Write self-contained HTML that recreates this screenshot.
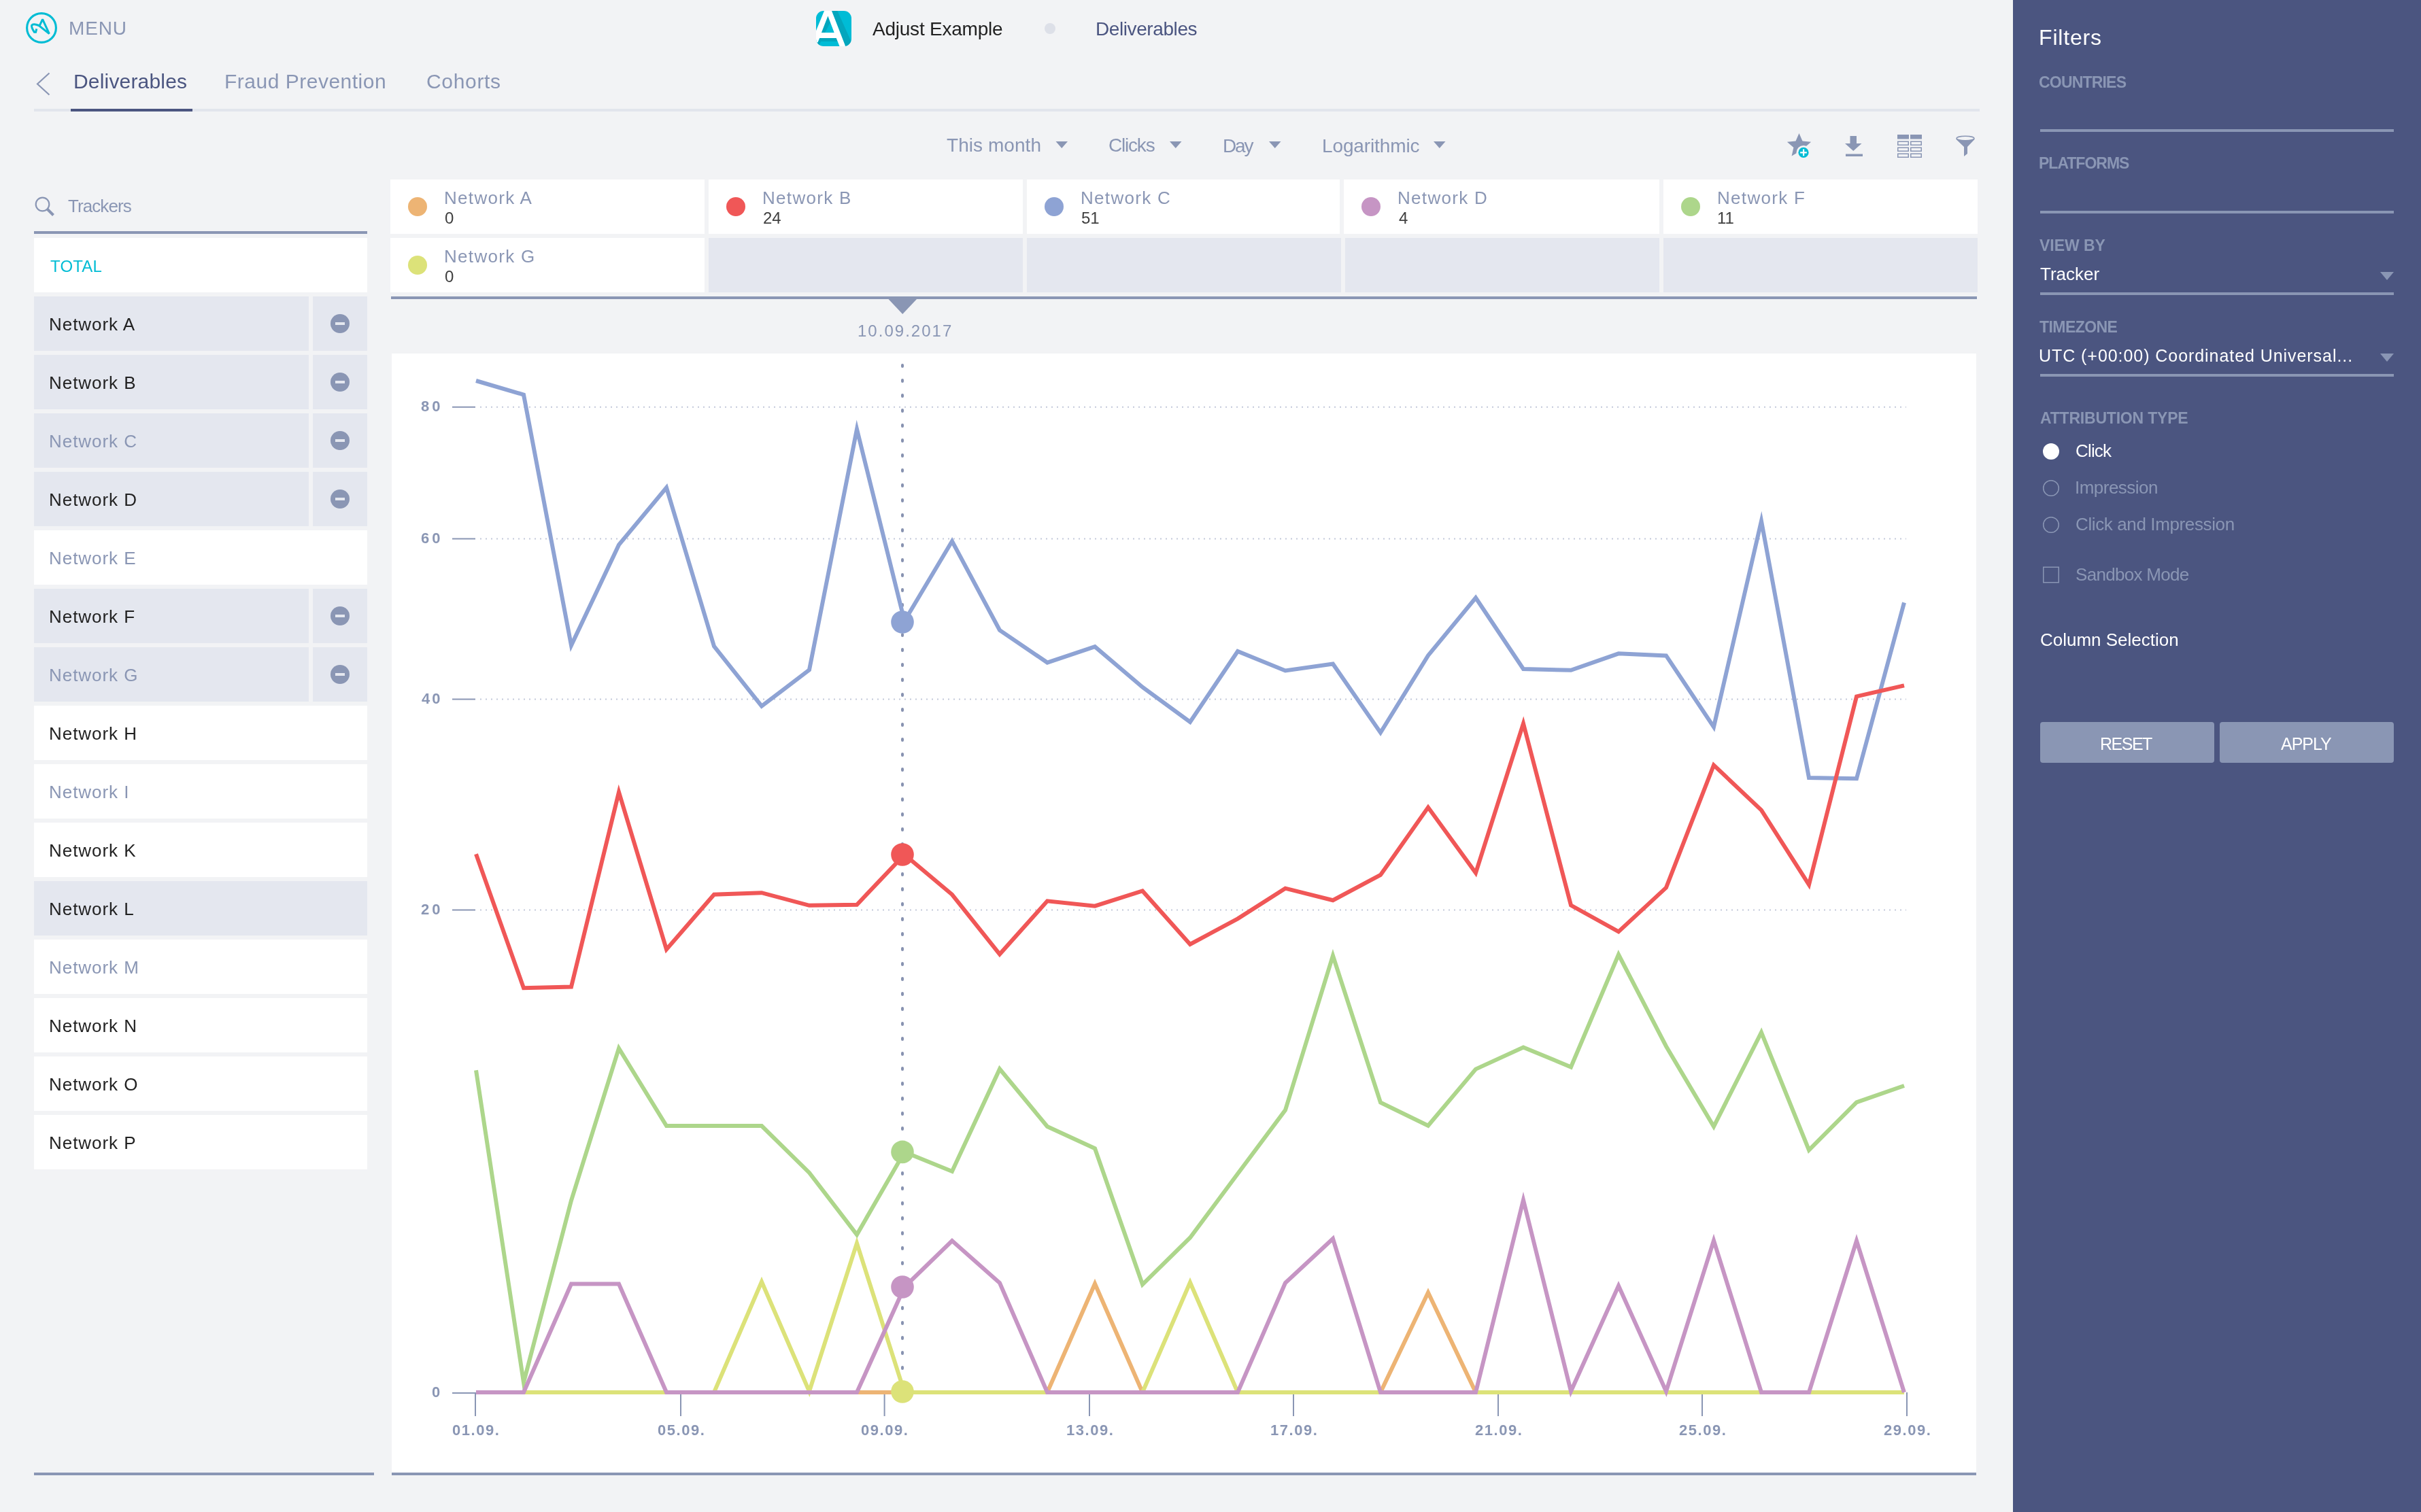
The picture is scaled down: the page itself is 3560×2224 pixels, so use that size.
<!DOCTYPE html>
<html><head><meta charset="utf-8"><style>
html,body{margin:0;padding:0;}
body{width:3560px;height:2224px;background:#f2f3f5;position:relative;overflow:hidden;font-family:"Liberation Sans",sans-serif;}
.r{position:absolute;}
.t{position:absolute;white-space:nowrap;will-change:transform;}
svg{position:absolute;left:0;top:0;}
</style></head><body>
<div class="r" style="left:2960px;top:0px;width:600px;height:2224px;background:#4b5580;"></div><div class="r" style="left:50px;top:160px;width:2861px;height:4px;background:#e2e5ec;"></div><div class="r" style="left:104px;top:160px;width:179px;height:4px;background:#4b5580;"></div><div class="r" style="left:50px;top:340px;width:490px;height:4px;background:#8a96b4;"></div><div class="r" style="left:50px;top:350px;width:490px;height:80px;background:#ffffff;"></div><div class="r" style="left:50px;top:436px;width:404px;height:80px;background:#e4e7ef;"></div><div class="r" style="left:460px;top:436px;width:80px;height:80px;background:#e4e7ef;"></div><div class="r" style="left:50px;top:522px;width:404px;height:80px;background:#e4e7ef;"></div><div class="r" style="left:460px;top:522px;width:80px;height:80px;background:#e4e7ef;"></div><div class="r" style="left:50px;top:608px;width:404px;height:80px;background:#e4e7ef;"></div><div class="r" style="left:460px;top:608px;width:80px;height:80px;background:#e4e7ef;"></div><div class="r" style="left:50px;top:694px;width:404px;height:80px;background:#e4e7ef;"></div><div class="r" style="left:460px;top:694px;width:80px;height:80px;background:#e4e7ef;"></div><div class="r" style="left:50px;top:780px;width:490px;height:80px;background:#ffffff;"></div><div class="r" style="left:50px;top:866px;width:404px;height:80px;background:#e4e7ef;"></div><div class="r" style="left:460px;top:866px;width:80px;height:80px;background:#e4e7ef;"></div><div class="r" style="left:50px;top:952px;width:404px;height:80px;background:#e4e7ef;"></div><div class="r" style="left:460px;top:952px;width:80px;height:80px;background:#e4e7ef;"></div><div class="r" style="left:50px;top:1038px;width:490px;height:80px;background:#ffffff;"></div><div class="r" style="left:50px;top:1124px;width:490px;height:80px;background:#ffffff;"></div><div class="r" style="left:50px;top:1210px;width:490px;height:80px;background:#ffffff;"></div><div class="r" style="left:50px;top:1296px;width:490px;height:80px;background:#e4e7ef;"></div><div class="r" style="left:50px;top:1382px;width:490px;height:80px;background:#ffffff;"></div><div class="r" style="left:50px;top:1468px;width:490px;height:80px;background:#ffffff;"></div><div class="r" style="left:50px;top:1554px;width:490px;height:80px;background:#ffffff;"></div><div class="r" style="left:50px;top:1640px;width:490px;height:80px;background:#ffffff;"></div><div class="r" style="left:50px;top:2166px;width:500px;height:4px;background:#8a96b4;"></div><div class="r" style="left:574px;top:264px;width:462px;height:80px;background:#ffffff;"></div><div class="r" style="left:574px;top:350px;width:462px;height:80px;background:#ffffff;"></div><div class="r" style="left:1042px;top:264px;width:462px;height:80px;background:#ffffff;"></div><div class="r" style="left:1042px;top:350px;width:462px;height:80px;background:#e4e7ef;"></div><div class="r" style="left:1510px;top:264px;width:460px;height:80px;background:#ffffff;"></div><div class="r" style="left:1510px;top:350px;width:462px;height:80px;background:#e4e7ef;"></div><div class="r" style="left:1976px;top:264px;width:464px;height:80px;background:#ffffff;"></div><div class="r" style="left:1978px;top:350px;width:462px;height:80px;background:#e4e7ef;"></div><div class="r" style="left:2446px;top:264px;width:462px;height:80px;background:#ffffff;"></div><div class="r" style="left:2446px;top:350px;width:462px;height:80px;background:#e4e7ef;"></div><div class="r" style="left:575px;top:436px;width:2332px;height:4px;background:#8a96b4;"></div><div class="r" style="left:576px;top:520px;width:2330px;height:1646px;background:#ffffff;"></div><div class="r" style="left:576px;top:2166px;width:2330px;height:4px;background:#8a96b4;"></div><div class="r" style="left:3000px;top:190px;width:520px;height:4px;background:#8a96b4;"></div><div class="r" style="left:3000px;top:310px;width:520px;height:4px;background:#8a96b4;"></div><div class="r" style="left:3000px;top:430px;width:520px;height:4px;background:#8a96b4;"></div><div class="r" style="left:3000px;top:550px;width:520px;height:4px;background:#8a96b4;"></div><div class="r" style="left:3000px;top:1062px;width:256px;height:60px;background:#8a96b4;border-radius:4px;"></div><div class="r" style="left:3264px;top:1062px;width:256px;height:60px;background:#8a96b4;border-radius:4px;"></div>
<svg width="3560" height="2224" viewBox="0 0 3560 2224">
<circle cx="500" cy="476" r="14" fill="#8a96b4"/><rect x="493" y="474" width="14" height="4" fill="#e4e7ef"/><circle cx="500" cy="562" r="14" fill="#8a96b4"/><rect x="493" y="560" width="14" height="4" fill="#e4e7ef"/><circle cx="500" cy="648" r="14" fill="#8a96b4"/><rect x="493" y="646" width="14" height="4" fill="#e4e7ef"/><circle cx="500" cy="734" r="14" fill="#8a96b4"/><rect x="493" y="732" width="14" height="4" fill="#e4e7ef"/><circle cx="500" cy="906" r="14" fill="#8a96b4"/><rect x="493" y="904" width="14" height="4" fill="#e4e7ef"/><circle cx="500" cy="992" r="14" fill="#8a96b4"/><rect x="493" y="990" width="14" height="4" fill="#e4e7ef"/><circle cx="614" cy="304" r="14" fill="#edb474"/><circle cx="1082" cy="304" r="14" fill="#f05757"/><circle cx="1550" cy="304" r="14" fill="#8ea3d4"/><circle cx="2016" cy="304" r="14" fill="#c695c4"/><circle cx="2486" cy="304" r="14" fill="#add68b"/><circle cx="614" cy="390" r="14" fill="#dce279"/><polygon points="1306.5,440 1348,440 1327.2,462" fill="#8a96b4"/><circle cx="61" cy="41" r="21.4" fill="none" stroke="#00bcd4" stroke-width="3.1"/><path d="M53.8 42.4 L52.6 47.2 L50.4 47.2 Q46 40.5 46.6 37.3 Q48.8 34 57.2 37.5 L72.4 49.6 L62.6 28.4 L58 38.2" fill="none" stroke="#00bcd4" stroke-width="3" stroke-linejoin="miter" stroke-miterlimit="2" stroke-linecap="butt"/><defs><clipPath id="appclip"><rect x="1200" y="16" width="52" height="52" rx="11" ry="11"/></clipPath></defs><g clip-path="url(#appclip)"><rect x="1200" y="16" width="52" height="52" fill="#00bcd6"/><polygon points="1223,16 1231.4,16 1252,62 1252,68 1243.2,68" fill="#03a6bd"/><polygon points="1207.9,47.9 1217.4,23.5 1221,33 1213,47.9" fill="#03a6bd"/><polygon points="1205.2,55.9 1229.7,55.9 1232,61 1207,61 1204,68 1196,68 1196,62.5 1202.4,62.5" fill="#03a6bd"/><path d="M1212,16 L1223,16 L1243.2,68 L1234.5,68 L1229.7,55.9 L1205.2,55.9 L1202.4,62.5 L1196,62.5 L1196,56 L1199.7,46 Z M1217.4,23.5 L1207.9,47.9 L1226.7,47.9 Z" fill="#ffffff" fill-rule="evenodd"/></g><circle cx="1544" cy="42" r="8" fill="#dde0e8"/><polyline points="72.5,107.5 55,123.5 72.5,139.5" fill="none" stroke="#8a96b4" stroke-width="2.2"/><circle cx="62.5" cy="300.5" r="9.8" fill="none" stroke="#8a96b4" stroke-width="2.2"/><line x1="69.5" y1="307.5" x2="78.5" y2="316.5" stroke="#8a96b4" stroke-width="4"/><polygon points="1552.5,208 1570.0,208 1561.25,218" fill="#8a96b4"/><polygon points="1720,208 1737.5,208 1728.75,218" fill="#8a96b4"/><polygon points="1866,208 1883.5,208 1874.75,218" fill="#8a96b4"/><polygon points="2108,208 2125.5,208 2116.75,218" fill="#8a96b4"/><polygon points="3500,400 3520,400 3510,412" fill="#8a96b4"/><polygon points="3500,520 3520,520 3510,532" fill="#8a96b4"/><circle cx="3016" cy="664" r="12" fill="#ffffff"/><circle cx="3016" cy="718" r="11.3" fill="none" stroke="#8a96b4" stroke-width="1.5"/><circle cx="3016" cy="772" r="11.3" fill="none" stroke="#8a96b4" stroke-width="1.5"/><rect x="3004.75" y="834.25" width="22.5" height="22.5" fill="none" stroke="#8a96b4" stroke-width="1.5"/><polygon points="2645.5,196.0 2650.5,207.6 2663.1,208.8 2653.6,217.1 2656.4,229.5 2645.5,223.0 2634.6,229.5 2637.4,217.1 2627.9,208.8 2640.5,207.6" fill="#8a96b4"/><circle cx="2652" cy="224.4" r="10.5" fill="#f2f3f5"/><circle cx="2652" cy="224.4" r="7.6" fill="#00bcd4"/><rect x="2651" y="219.5" width="2.2" height="9.8" fill="#fff"/><rect x="2647.1" y="223.3" width="9.8" height="2.2" fill="#fff"/><polygon points="2720.5,200 2730,200 2730,211 2737.5,211 2725.25,222 2713,211 2720.5,211" fill="#8a96b4"/><rect x="2714" y="226.5" width="25" height="3.5" fill="#8a96b4"/><rect x="2790" y="198" width="17" height="6.5" fill="#8a96b4"/><rect x="2809" y="198" width="17" height="6.5" fill="#8a96b4"/><rect x="2790.75" y="208.25" width="15.5" height="5" fill="none" stroke="#8a96b4" stroke-width="1.5"/><rect x="2809.75" y="208.25" width="15.5" height="5" fill="none" stroke="#8a96b4" stroke-width="1.5"/><rect x="2790.75" y="217.25" width="15.5" height="5" fill="none" stroke="#8a96b4" stroke-width="1.5"/><rect x="2809.75" y="217.25" width="15.5" height="5" fill="none" stroke="#8a96b4" stroke-width="1.5"/><rect x="2790.75" y="226.25" width="15.5" height="5" fill="none" stroke="#8a96b4" stroke-width="1.5"/><rect x="2809.75" y="226.25" width="15.5" height="5" fill="none" stroke="#8a96b4" stroke-width="1.5"/><path d="M2876 204.5 L2904 204.5 L2893 216 L2893 226 L2888 230 L2888 216 Z" fill="#8a96b4"/><ellipse cx="2890" cy="203.5" rx="13" ry="3.2" fill="#f2f3f5" stroke="#8a96b4" stroke-width="1.5"/><line x1="706" y1="598.8" x2="2803" y2="598.8" stroke="#c3c9da" stroke-width="2" stroke-dasharray="2 6"/><line x1="665" y1="598.8" x2="699" y2="598.8" stroke="#8a96b4" stroke-width="2"/><line x1="706" y1="792.5" x2="2803" y2="792.5" stroke="#c3c9da" stroke-width="2" stroke-dasharray="2 6"/><line x1="665" y1="792.5" x2="699" y2="792.5" stroke="#8a96b4" stroke-width="2"/><line x1="706" y1="1028.6" x2="2803" y2="1028.6" stroke="#c3c9da" stroke-width="2" stroke-dasharray="2 6"/><line x1="665" y1="1028.6" x2="699" y2="1028.6" stroke="#8a96b4" stroke-width="2"/><line x1="706" y1="1338.5" x2="2803" y2="1338.5" stroke="#c3c9da" stroke-width="2" stroke-dasharray="2 6"/><line x1="665" y1="1338.5" x2="699" y2="1338.5" stroke="#8a96b4" stroke-width="2"/><line x1="665" y1="2049" x2="701" y2="2049" stroke="#8a96b4" stroke-width="2"/><line x1="699" y1="2048" x2="699" y2="2083" stroke="#8a96b4" stroke-width="2"/><line x1="1001" y1="2048" x2="1001" y2="2083" stroke="#8a96b4" stroke-width="2"/><line x1="1300.6" y1="2048" x2="1300.6" y2="2083" stroke="#8a96b4" stroke-width="2"/><line x1="1602" y1="2048" x2="1602" y2="2083" stroke="#8a96b4" stroke-width="2"/><line x1="1902" y1="2048" x2="1902" y2="2083" stroke="#8a96b4" stroke-width="2"/><line x1="2203" y1="2048" x2="2203" y2="2083" stroke="#8a96b4" stroke-width="2"/><line x1="2503" y1="2048" x2="2503" y2="2083" stroke="#8a96b4" stroke-width="2"/><line x1="2804" y1="2048" x2="2804" y2="2083" stroke="#8a96b4" stroke-width="2"/><line x1="1327" y1="537" x2="1327" y2="2040" stroke="#8792b0" stroke-width="4" stroke-dasharray="2 20" stroke-linecap="round"/><polyline points="700,2048.0 770,2048.0 840,2048.0 910,2048.0 980,2048.0 1050,2048.0 1120,2048.0 1190,2048.0 1260,2048.0 1330,2048.0 1400,2048.0 1470,2048.0 1540,2048.0 1610,1888.3 1680,2048.0 1750,2048.0 1820,2048.0 1890,2048.0 1960,2048.0 2030,2048.0 2100,1901.2 2170,2048.0 2240,2048.0 2310,2048.0 2380,2048.0 2450,2048.0 2520,2048.0 2590,2048.0 2660,2048.0 2730,2048.0 2800,2048.0" fill="none" stroke="#edb474" stroke-width="6" stroke-linejoin="miter" stroke-miterlimit="10"/><polyline points="700,2048.0 770,2048.0 840,2048.0 910,2048.0 980,2048.0 1050,2048.0 1120,1885.3 1190,2046.6 1260,1828.7 1330,2048.0 1400,2048.0 1470,2048.0 1540,2048.0 1610,2048.0 1680,2048.0 1750,1886.3 1820,2048.0 1890,2048.0 1960,2048.0 2030,2048.0 2100,2048.0 2170,2048.0 2240,2048.0 2310,2048.0 2380,2048.0 2450,2048.0 2520,2048.0 2590,2048.0 2660,2048.0 2730,2048.0 2800,2048.0" fill="none" stroke="#dce279" stroke-width="6" stroke-linejoin="miter" stroke-miterlimit="10"/><polyline points="700,560.0 770,580.6 840,949.4 910,801.4 980,717.3 1050,950.5 1120,1038.7 1190,985.4 1260,631.3 1330,913.5 1400,796.0 1470,927.0 1540,974.6 1610,951.2 1680,1010.7 1750,1062.0 1820,958.0 1890,986.5 1960,976.5 2030,1077.6 2100,964.2 2170,879.3 2240,984.0 2310,985.8 2380,961.3 2450,964.4 2520,1069.3 2590,766.4 2660,1144.0 2730,1145.3 2800,886.4" fill="none" stroke="#8ea3d4" stroke-width="6" stroke-linejoin="miter" stroke-miterlimit="10"/><polyline points="700,1256.3 770,1453.3 840,1451.5 910,1165.2 980,1396.4 1050,1315.8 1120,1313.2 1190,1331.8 1260,1330.7 1330,1257.0 1400,1315.8 1470,1403.6 1540,1325.3 1610,1332.7 1680,1310.4 1750,1389.0 1820,1351.3 1890,1306.7 1960,1324.2 2030,1287.0 2100,1187.6 2170,1283.9 2240,1064.3 2310,1331.6 2380,1370.4 2450,1305.6 2520,1125.4 2590,1191.6 2660,1301.3 2730,1024.4 2800,1008.3" fill="none" stroke="#f05757" stroke-width="6" stroke-linejoin="miter" stroke-miterlimit="10"/><polyline points="700,1574.3 770,2033.5 840,1765.8 910,1541.9 980,1656.0 1050,1656.0 1120,1656.0 1190,1724.9 1260,1816.0 1330,1694.4 1400,1723.0 1470,1572.4 1540,1657.0 1610,1689.3 1680,1889.3 1750,1820.5 1820,1726.5 1890,1632.8 1960,1405.7 2030,1621.6 2100,1655.8 2170,1572.6 2240,1540.4 2310,1569.5 2380,1404.1 2450,1539.0 2520,1657.0 2590,1518.6 2660,1691.6 2730,1621.4 2800,1597.0" fill="none" stroke="#add68b" stroke-width="6" stroke-linejoin="miter" stroke-miterlimit="10"/><polyline points="700,2048.0 770,2048.0 840,1888.5 910,1888.5 980,2048.0 1050,2048.0 1120,2048.0 1190,2048.0 1260,2048.0 1330,1893.0 1400,1825.0 1470,1887.0 1540,2048.0 1610,2048.0 1680,2048.0 1750,2048.0 1820,2048.0 1890,1887.0 1960,1822.0 2030,2048.0 2100,2048.0 2170,2048.0 2240,1765.1 2310,2046.5 2380,1891.2 2450,2046.6 2520,1824.7 2590,2048.0 2660,2048.0 2730,1825.1 2800,2048.0" fill="none" stroke="#c695c4" stroke-width="6" stroke-linejoin="miter" stroke-miterlimit="10"/><circle cx="1327" cy="915" r="16.8" fill="#8ea3d4"/><circle cx="1327" cy="1257" r="16.8" fill="#f05757"/><circle cx="1327" cy="1694.4" r="16.8" fill="#add68b"/><circle cx="1327" cy="1893" r="16.8" fill="#c695c4"/><circle cx="1327" cy="2047" r="16.8" fill="#dce279"/>
</svg>
<div class="t" style="left:101.0px;top:28.0px;font-size:28px;line-height:28px;color:#8a96b4;letter-spacing:0.83px;">MENU</div><div class="t" style="left:108.0px;top:105.0px;font-size:30px;line-height:30px;color:#4b5580;letter-spacing:0.18px;">Deliverables</div><div class="t" style="left:330.0px;top:105.0px;font-size:30px;line-height:30px;color:#8a96b4;letter-spacing:0.50px;">Fraud Prevention</div><div class="t" style="left:627.3px;top:105.0px;font-size:30px;line-height:30px;color:#8a96b4;letter-spacing:0.67px;">Cohorts</div><div class="t" style="left:1283.0px;top:28.5px;font-size:28px;line-height:28px;color:#222222;letter-spacing:-0.23px;">Adjust Example</div><div class="t" style="left:1611.0px;top:28.5px;font-size:28px;line-height:28px;color:#4b5580;letter-spacing:-0.41px;">Deliverables</div><div class="t" style="left:1391.5px;top:200.0px;font-size:28px;line-height:28px;color:#8a96b4;letter-spacing:0.06px;">This month</div><div class="t" style="left:1630.0px;top:200.0px;font-size:28px;line-height:28px;color:#8a96b4;letter-spacing:-1.20px;">Clicks</div><div class="t" style="left:1798.0px;top:200.8px;font-size:28px;line-height:28px;color:#8a96b4;letter-spacing:-2.20px;">Day</div><div class="t" style="left:1943.8px;top:200.8px;font-size:28px;line-height:28px;color:#8a96b4;letter-spacing:-0.12px;">Logarithmic</div><div class="t" style="left:100.0px;top:290.0px;font-size:26px;line-height:26px;color:#8a96b4;letter-spacing:-0.93px;">Trackers</div><div class="t" style="left:74.4px;top:380.0px;font-size:24px;line-height:24px;color:#00bcd4;letter-spacing:0.15px;">TOTAL</div><div class="t" style="left:72.4px;top:464.3px;font-size:26px;line-height:26px;color:#222222;letter-spacing:0.95px;">Network A</div><div class="t" style="left:72.4px;top:550.3px;font-size:26px;line-height:26px;color:#222222;letter-spacing:0.95px;">Network B</div><div class="t" style="left:72.4px;top:636.3px;font-size:26px;line-height:26px;color:#8a96b4;letter-spacing:0.95px;">Network C</div><div class="t" style="left:72.4px;top:722.3px;font-size:26px;line-height:26px;color:#222222;letter-spacing:0.95px;">Network D</div><div class="t" style="left:72.4px;top:808.3px;font-size:26px;line-height:26px;color:#8a96b4;letter-spacing:0.95px;">Network E</div><div class="t" style="left:72.4px;top:894.3px;font-size:26px;line-height:26px;color:#222222;letter-spacing:0.95px;">Network F</div><div class="t" style="left:72.4px;top:980.3px;font-size:26px;line-height:26px;color:#8a96b4;letter-spacing:0.95px;">Network G</div><div class="t" style="left:72.4px;top:1066.3px;font-size:26px;line-height:26px;color:#222222;letter-spacing:0.95px;">Network H</div><div class="t" style="left:72.4px;top:1152.3px;font-size:26px;line-height:26px;color:#8a96b4;letter-spacing:0.95px;">Network I</div><div class="t" style="left:72.4px;top:1238.3px;font-size:26px;line-height:26px;color:#222222;letter-spacing:0.95px;">Network K</div><div class="t" style="left:72.4px;top:1324.3px;font-size:26px;line-height:26px;color:#222222;letter-spacing:0.95px;">Network L</div><div class="t" style="left:72.4px;top:1410.3px;font-size:26px;line-height:26px;color:#8a96b4;letter-spacing:0.95px;">Network M</div><div class="t" style="left:72.4px;top:1496.3px;font-size:26px;line-height:26px;color:#222222;letter-spacing:0.95px;">Network N</div><div class="t" style="left:72.4px;top:1582.3px;font-size:26px;line-height:26px;color:#222222;letter-spacing:0.95px;">Network O</div><div class="t" style="left:72.4px;top:1668.3px;font-size:26px;line-height:26px;color:#222222;letter-spacing:0.95px;">Network P</div><div class="t" style="left:653.0px;top:278.3px;font-size:26px;line-height:26px;color:#8a96b4;letter-spacing:1.31px;">Network A</div><div class="t" style="left:654.2px;top:308.6px;font-size:24px;line-height:24px;color:#404040;">0</div><div class="t" style="left:1121.0px;top:278.3px;font-size:26px;line-height:26px;color:#8a96b4;letter-spacing:1.31px;">Network B</div><div class="t" style="left:1122.2px;top:308.6px;font-size:24px;line-height:24px;color:#404040;">24</div><div class="t" style="left:1589.0px;top:278.3px;font-size:26px;line-height:26px;color:#8a96b4;letter-spacing:1.31px;">Network C</div><div class="t" style="left:1590.2px;top:308.6px;font-size:24px;line-height:24px;color:#404040;">51</div><div class="t" style="left:2055.0px;top:278.3px;font-size:26px;line-height:26px;color:#8a96b4;letter-spacing:1.31px;">Network D</div><div class="t" style="left:2057.2px;top:308.6px;font-size:24px;line-height:24px;color:#404040;">4</div><div class="t" style="left:2525.0px;top:278.3px;font-size:26px;line-height:26px;color:#8a96b4;letter-spacing:1.31px;">Network F</div><div class="t" style="left:2525.2px;top:308.6px;font-size:24px;line-height:24px;color:#404040;">11</div><div class="t" style="left:653.0px;top:364.3px;font-size:26px;line-height:26px;color:#8a96b4;letter-spacing:1.31px;">Network G</div><div class="t" style="left:654.2px;top:394.6px;font-size:24px;line-height:24px;color:#404040;">0</div><div class="t" style="left:1260.8px;top:475.3px;font-size:24px;line-height:24px;color:#8a96b4;letter-spacing:2.02px;">10.09.2017</div><div class="t" style="left:618.5px;top:587.3px;font-size:22px;line-height:22px;color:#8a96b4;font-weight:700;letter-spacing:4.00px;">80</div><div class="t" style="left:618.5px;top:781.0px;font-size:22px;line-height:22px;color:#8a96b4;font-weight:700;letter-spacing:4.00px;">60</div><div class="t" style="left:619.5px;top:1017.1px;font-size:22px;line-height:22px;color:#8a96b4;font-weight:700;letter-spacing:3.00px;">40</div><div class="t" style="left:618.5px;top:1327.0px;font-size:22px;line-height:22px;color:#8a96b4;font-weight:700;letter-spacing:4.00px;">20</div><div class="t" style="left:634.5px;top:2037.4px;font-size:22px;line-height:22px;color:#8a96b4;font-weight:700;">0</div><div class="t" style="left:664.6px;top:2093.0px;font-size:22px;line-height:22px;color:#8a96b4;font-weight:700;letter-spacing:1.56px;">01.09.</div><div class="t" style="left:966.6px;top:2093.0px;font-size:22px;line-height:22px;color:#8a96b4;font-weight:700;letter-spacing:1.56px;">05.09.</div><div class="t" style="left:1266.2px;top:2093.0px;font-size:22px;line-height:22px;color:#8a96b4;font-weight:700;letter-spacing:1.56px;">09.09.</div><div class="t" style="left:1567.6px;top:2093.0px;font-size:22px;line-height:22px;color:#8a96b4;font-weight:700;letter-spacing:1.56px;">13.09.</div><div class="t" style="left:1867.6px;top:2093.0px;font-size:22px;line-height:22px;color:#8a96b4;font-weight:700;letter-spacing:1.56px;">17.09.</div><div class="t" style="left:2168.6px;top:2093.0px;font-size:22px;line-height:22px;color:#8a96b4;font-weight:700;letter-spacing:1.56px;">21.09.</div><div class="t" style="left:2468.6px;top:2093.0px;font-size:22px;line-height:22px;color:#8a96b4;font-weight:700;letter-spacing:1.56px;">25.09.</div><div class="t" style="left:2769.6px;top:2093.0px;font-size:22px;line-height:22px;color:#8a96b4;font-weight:700;letter-spacing:1.56px;">29.09.</div><div class="t" style="left:2998.0px;top:38.6px;font-size:32px;line-height:32px;color:#ffffff;letter-spacing:0.83px;">Filters</div><div class="t" style="left:2998.0px;top:109.6px;font-size:23px;line-height:23px;color:#8a96b4;font-weight:700;letter-spacing:-0.81px;">COUNTRIES</div><div class="t" style="left:2998.0px;top:229.0px;font-size:23px;line-height:23px;color:#8a96b4;font-weight:700;letter-spacing:-1.00px;">PLATFORMS</div><div class="t" style="left:2999.0px;top:349.5px;font-size:23px;line-height:23px;color:#8a96b4;font-weight:700;letter-spacing:-0.03px;">VIEW BY</div><div class="t" style="left:3000.0px;top:390.0px;font-size:26px;line-height:26px;color:#ffffff;">Tracker</div><div class="t" style="left:2999.0px;top:470.0px;font-size:23px;line-height:23px;color:#8a96b4;font-weight:700;letter-spacing:-0.57px;">TIMEZONE</div><div class="t" style="left:2998.0px;top:511.0px;font-size:25px;line-height:25px;color:#ffffff;letter-spacing:0.94px;">UTC (+00:00) Coordinated Universal...</div><div class="t" style="left:3000.0px;top:604.0px;font-size:23px;line-height:23px;color:#8a96b4;font-weight:700;letter-spacing:-0.20px;">ATTRIBUTION TYPE</div><div class="t" style="left:3052.0px;top:650.0px;font-size:26px;line-height:26px;color:#ffffff;letter-spacing:-0.82px;">Click</div><div class="t" style="left:3050.6px;top:704.0px;font-size:26px;line-height:26px;color:#8a96b4;letter-spacing:-0.53px;">Impression</div><div class="t" style="left:3051.6px;top:758.0px;font-size:26px;line-height:26px;color:#8a96b4;letter-spacing:-0.38px;">Click and Impression</div><div class="t" style="left:3051.6px;top:831.8px;font-size:26px;line-height:26px;color:#8a96b4;letter-spacing:-0.71px;">Sandbox Mode</div><div class="t" style="left:2999.8px;top:928.0px;font-size:26px;line-height:26px;color:#ffffff;letter-spacing:-0.01px;">Column Selection</div><div class="t" style="left:3088.0px;top:1081.6px;font-size:25px;line-height:25px;color:#ffffff;letter-spacing:-1.50px;">RESET</div><div class="t" style="left:3354.4px;top:1081.6px;font-size:25px;line-height:25px;color:#ffffff;letter-spacing:-1.02px;">APPLY</div>
</body></html>
